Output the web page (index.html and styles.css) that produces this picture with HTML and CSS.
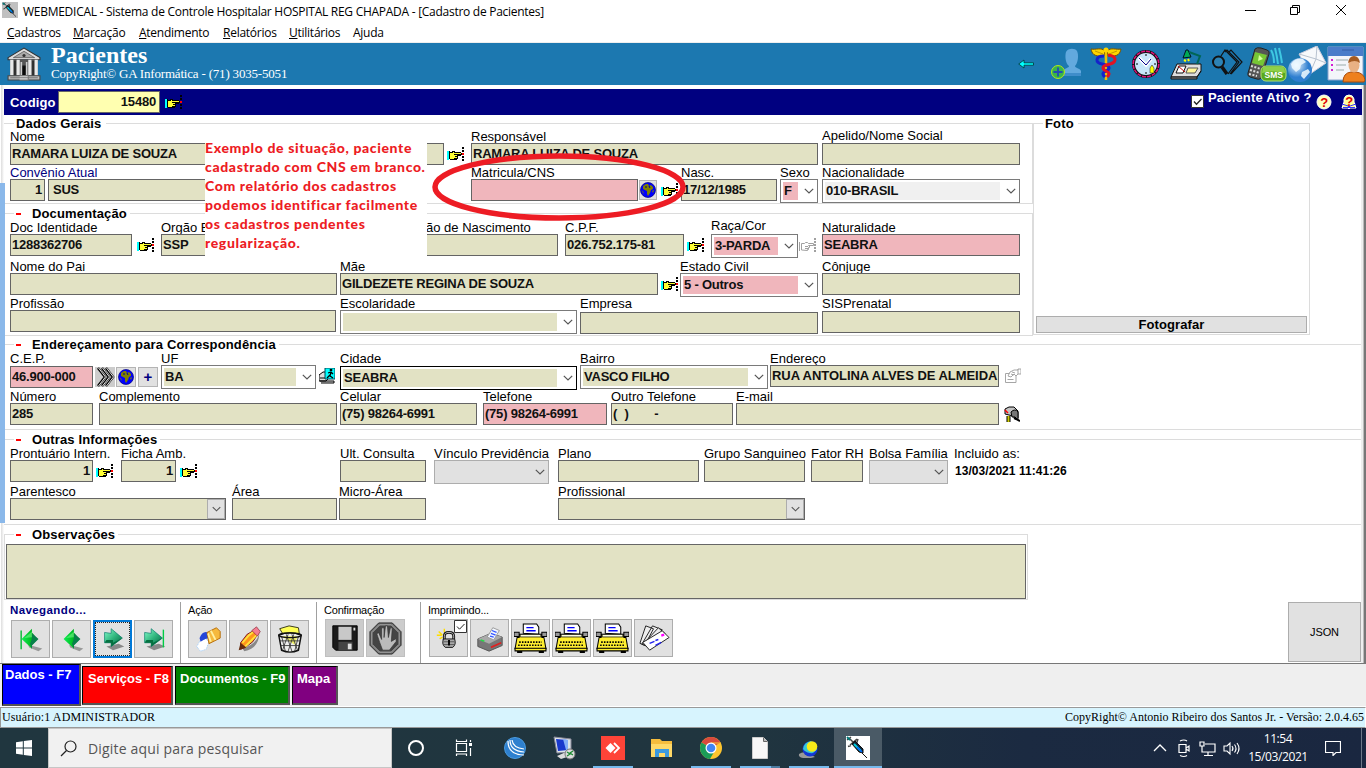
FILE: index.html
```html
<!DOCTYPE html>
<html lang="pt-BR">
<head>
<meta charset="utf-8">
<title>WEBMEDICAL - Cadastro de Pacientes</title>
<link rel="stylesheet" href="styles.css">
</head>
<body>
<svg class="defs" aria-hidden="true">
  <symbol id="hand" viewBox="0 0 17 15">
    <g shape-rendering="crispEdges">
    <path d="M0 4h2v9H0z" fill="#0ff"/>
    <path d="M2 4h1v1h2v-1h3v1h6v1h1v2h-1v1h-3v3h-1v1H3v-1H2z" fill="#000"/>
    <path d="M3 6h3V5h1v1h7v1H9v5H3z" fill="#ff3"/>
    <path d="M9 8h1v1H9zM9 10h1v1H9z" fill="#ff3"/>
    <path d="M7 7h2v1H7zM8 9h2v1H8zM7 11h2v1H7z" fill="#000"/>
    <path d="M15 0h2v2h-2zM15 3h2v2h-2zM15 9h2v2h-2zM15 12h2v2h-2z" fill="#000"/>
    <path d="M15 6h2v2h-2z" fill="#f00"/>
    </g>
  </symbol>
  <symbol id="hand-off" viewBox="0 0 17 15">
    <path d="M.5 4v9M2.500 12V5.500h3l1-1h2l1 1h5v2H9.500h1v2h-1v2h-1v1zM6 8.500h3M6 10.500h3" fill="none" stroke="#a0a0a0"/>
    <path d="M15 0h2v2h-2zM15 3h2v2h-2zM15 6h2v2h-2zM15 9h2v2h-2zM15 12h2v2h-2z" fill="#a0a0a0"/>
  </symbol>
  <symbol id="globe" viewBox="0 0 16 16">
    <circle cx="8" cy="8" r="7.500" fill="#00f" stroke="#000080" stroke-width=".7"/>
    <path d="M3 4l3-2h2l1 2 2-1 2 2v2l-2 1-1 3-2 3-1-2V9L5 8 3 7zM1.500 8l2 2v2zM12 9l2-1-1 3z" fill="#808000"/>
    <path d="M9 4l1 2M5 5h2" stroke="#00008b"/>
  </symbol>
  <symbol id="syringe" viewBox="0 0 24 24">
    <path d="M1 4l4-3M3 2l5 5M2 10.500l3-1M4 9l7-6M10 12l1-6 1-3" stroke="#444" stroke-width="1.500" fill="none"/>
    <path d="M1 1l3 3" stroke="#077" stroke-width="2"/>
    <path d="M6 8l3-3 8 8v4l-4-1z" fill="#123" stroke="#111"/>
    <path d="M8 8l7 7" stroke="#0cd" stroke-width="2"/>
    <path d="M11 11l5 5" stroke="#06f" stroke-width="1.500"/>
    <path d="M16 17l5 5" stroke="#111"/>
  </symbol>
  <symbol id="typewriter" viewBox="0 0 32 30">
    <path d="M9 10V1h13l2 3v7z" fill="#fff" stroke="#000"/>
    <path d="M12 4.500h7M12 7.500h9" stroke="#00f" stroke-width="1.300"/>
    <path d="M5 11h22v3h2l2 11H1l2-11h2z" fill="#ffee30" stroke="#000"/>
    <path d="M6 11h20v2.500H6z" fill="#ffd" stroke="#000" stroke-width=".7"/>
    <path d="M0 9h5v4H0zM27 9h5v4h-5z" fill="#999" stroke="#000"/>
    <path d="M5 18.500h22M4 21.500h24" stroke="#000" stroke-width="1.500" stroke-dasharray="1.500 1.200"/>
    <path d="M1 24.500h30v2.500H1z" fill="#ffee30" stroke="#000"/>
    <path d="M3 28h5M24 28h5" stroke="#000" stroke-width="2"/>
  </symbol>
  <symbol id="caret" viewBox="0 0 10 6"><path d="M.8.8L5 5 9.200.8" fill="none" stroke="#555" stroke-width="1.200"/></symbol>
  <linearGradient id="teal" x1="0" x2="1" y1="0" y2="1"><stop offset="0" stop-color="#8fc"/><stop offset=".5" stop-color="#2fb57d"/><stop offset="1" stop-color="#006040"/></linearGradient>
  <linearGradient id="lime" x1="0" x2="1"><stop offset="0" stop-color="#1e5"/><stop offset=".6" stop-color="#0b2"/><stop offset="1" stop-color="#043"/></linearGradient>
  <radialGradient id="earth" cx=".35" cy=".3"><stop offset="0" stop-color="#e8f5ff"/><stop offset="1" stop-color="#2f7fd0"/></radialGradient>
</svg>

<header class="titlebar">
  <svg class="app-icon"><rect width="16" height="16" fill="#c0c0c0"/><use href="#syringe" width="16" height="16"/></svg>
  <h1 class="title">WEBMEDICAL - Sistema de Controle Hospitalar HOSPITAL REG CHAPADA - [Cadastro de Pacientes]</h1>
  <svg class="window-buttons" viewBox="0 0 104 12"><path d="M0 6.500h11M45.500 3.500h7v7h-7zM47.500 3V1.500h7v7H53M91 1l10 10M101 1L91 11" fill="none" stroke="#000"/></svg>
</header>
<nav class="menu">
  <span class="m1"><u>C</u>adastros</span><span class="m2"><u>M</u>arcação</span><span class="m3"><u>A</u>tendimento</span><span class="m4"><u>R</u>elatórios</span><span class="m5"><u>U</u>tilitários</span><span>Ajuda</span>
</nav>

<div class="banner">
  <svg class="temple" viewBox="0 0 32 32">
    <path d="M1 10L16 1l15 9v2H1z" fill="#ddd" stroke="#333"/>
    <path d="M6 10l10-6 10 6z" fill="#aaa" stroke="#555" stroke-width=".7"/><circle cx="16" cy="8" r="1.500" fill="#333"/>
    <path d="M3 12h26v15H3z" fill="#555"/>
    <path d="M4.500 12v15M10.500 12v15M21.500 12v15M27.500 12v15" stroke="#e8e8e8" stroke-width="3"/>
    <path d="M13.500 14v13M18.500 14v13" stroke="#ccc" stroke-width="1.500"/>
    <path d="M7.500 13v14M24.500 13v14M15 18h2v9h-2z" stroke="#111" stroke-width="1"/>
    <path d="M1 27h30v4H1z" fill="#bbb" stroke="#444"/><path d="M3 29h26M12 27h8v4h-8" stroke="#777" fill="#ddd"/>
  </svg>
  <div class="banner-text"><h2>Pacientes</h2><p>CopyRight© GA Informática - (71) 3035-5051</p></div>
  <div class="banner-icons">
    <svg class="bi-arrow" viewBox="0 0 16 10"><path d="M.7 5L6 1v2.800h9.500v2.400H6V9z" fill="#0ff" stroke="#033" stroke-width=".8"/></svg>
    <svg viewBox="0 0 32 32"><path d="M14 22c1-2 5-2 5-4-4-3-4-11-3-14 2-4 9-4 11-1 2 4 1 12-2 15 0 2 5 2 6 5v5H10z" fill="#62a9de"/><path d="M15 25h16v3H12z" fill="#3f8dca"/><circle cx="8" cy="24" r="6.500" fill="#39b54a" stroke="#b5e61d" stroke-width="1"/><path d="M8 19.500v9M3.500 24h9" stroke="#234bb5" stroke-width="1.800"/></svg>
    <svg class="bi-cad" viewBox="0 0 32 34"><path d="M15 4C11 0 6 3 1 2c1 4 2 8 13 7zM17 4c4-4 9-1 14-2-1 4-2 8-13 7z" fill="#ffd500" stroke="#765000"/><path d="M5 4l8 3M27 4l-8 3" stroke="#b08a00" stroke-width=".8"/><path d="M16 2v31" stroke="#f5c000" stroke-width="2.500"/><path d="M14 9c-9 0-9 7-2 8 8 2 9 4 4 7-4 2-4 3-1 6" fill="none" stroke="#1622ca" stroke-width="3"/><path d="M18 8c9 1 9 7 2 9-8 2-9 4-4 7 4 2 4 3 1 6" fill="none" stroke="#e31322" stroke-width="3"/><circle cx="16" cy="3" r="2.500" fill="#ffd500"/></svg>
    <svg class="bi-clock" viewBox="0 0 28 30"><circle cx="14" cy="15" r="12.500" fill="#c9e6fa" stroke="#111" stroke-width="3"/><circle cx="14" cy="15" r="12.800" fill="none" stroke="#e0107a" stroke-width="1.500" stroke-dasharray="4 1"/><path d="M7 9l7 7 5-6" fill="none" stroke="#fff" stroke-width="3.500"/><path d="M7 9l7 7 5-6" fill="none" stroke="#008" stroke-width="1"/><path d="M14 5v2M14 23v2M4 15h2M22 15h2" stroke="#000"/><path d="M18 24v-5l2-3 2 3v5z" fill="#ff0" stroke="#333" stroke-width=".6"/></svg>
    <svg viewBox="0 0 32 32"><path d="M7 16h24v7l-4 6H1z" fill="#dedede" stroke="#111"/><path d="M1 29h26v2H1zM27 29l4-6" fill="#888" stroke="#111"/><path d="M9 18h7l-3 7H6z" fill="#fff" stroke="#111"/><path d="M8 18l7 6" stroke="#c00"/><path d="M18 20h10l-3 5h-9z" fill="#fff799" stroke="#555"/><path d="M13 10l3-8h2l3 7z" fill="#0a5" stroke="#012"/><path d="M19 4l11 4-3 8" fill="none" stroke="#065" stroke-width="2"/><path d="M14 12l2 1M18 11l1 2" stroke="#ff0" stroke-width="2"/></svg>
    <svg viewBox="0 0 32 32"><path d="M10 8l4-6 12 12-9 12M14 4l2-2 12 12-9 12M18 4l2-2 11 12-11 12" fill="none" stroke="#111" stroke-width="1.200"/><circle cx="7.500" cy="14" r="5.500" fill="#2d83b5" stroke="#111" stroke-width="2"/><path d="M11 19l5 7" stroke="#111" stroke-width="3.500"/></svg>
    <svg class="bi-wide" viewBox="0 0 40 36"><path d="M8 3q2-2 6-1l6 2q3 1 2 4l-7 22q-1 4-5 3l-7-2q-3-1-2-4z" fill="#555" stroke="#222"/><path d="M8 6l12 3-4 11-11-3z" fill="#76c635"/><path d="M12 9l4 4-5 2z" fill="#d6ff9d"/><path d="M4 20l10 3M3 24l10 3M2 28l8 2" stroke="#ddd" stroke-width="2" stroke-dasharray="2 1.500"/><path d="M24 4q3 5 3 13M28 2q2 8 3 16M32 2q2 8 3 15" fill="none" stroke="#3ec8e2" stroke-width="2"/><rect x="14" y="20" width="25" height="15" rx="5" fill="#58a91f" stroke="#b4e36f"/><path d="M16 21h20q2 0 2 6-12-3-23 0z" fill="#8ed049"/><text class="sms" x="17.500" y="31.500">SMS</text></svg>
    <svg class="bi-wide" viewBox="0 0 40 36"><path d="M12 8L30 0l9 17-16 11z" fill="#f7f9fb" stroke="#ccd"/><path d="M12 8l17 5 1-13M29 13l10 4M29 13l-6 14" fill="none" stroke="#b8c2cf"/><circle cx="13" cy="24" r="12" fill="url(#earth)"/><path d="M4 18q5-7 12-5l3 3-5 3-1 4-4 3-4-4zM15 26l6-3 2 3-6 7-3-3z" fill="#f1faff" opacity=".85"/></svg>
    <svg class="bi-card" viewBox="0 0 39 37"><path d="M1 1h35v33H1z" fill="#f3f5fa" stroke="#8aa4cf"/><path d="M1 1h35v9H1z" fill="#4a7cc9"/><path d="M15 4h12" stroke="#335da5"/><path d="M4 14h2M4 19h2M4 24h2" stroke="#d21ed2" stroke-width="2"/><path d="M9 14h12M9 19h10M9 24h8" stroke="#9aa" stroke-width="1"/><path d="M16 36q0-9 8-10h5q8 1 9 8l-1 2z" fill="#ee801e" stroke="#a94a0a"/><ellipse cx="27" cy="19" rx="5.500" ry="7.500" fill="#e9b184"/><path d="M21 17q1-7 6-7t6 7q-5-4-12 0z" fill="#a55b22"/></svg>
  </div>
</div>

<main class="work">
  <div class="edge-strip"></div>
  <div class="codebar">
    <label>Codigo</label><span class="code">15480</span><svg class="hand"><use href="#hand"/></svg>
    <div class="active">
      <svg class="check" viewBox="0 0 13 13"><path d="M.5.5h12v12H.5z" fill="#fff" stroke="#333"/><path d="M3 6.500l2.500 2.700L10.500 4" fill="none" stroke="#222" stroke-width="1.300"/></svg>
      <span>Paciente Ativo ?</span>
      <svg class="help" viewBox="0 0 16 16"><circle cx="8" cy="8" r="7" fill="#ffffc0" stroke="#fff"/><text class="q" x="4.300" y="13">?</text></svg>
      <svg class="help2" viewBox="0 0 16 16"><path d="M3 5q1-4 5-4t5 4v3l2 6H9l-1 1-1-1H1l2-6z" fill="#ff9" stroke="#fff"/><path d="M1 10l6 2 1 1 1-1 6-2M2 13.500h12" stroke="#33f" fill="none"/><text class="q" x="4.300" y="11.500">?</text></svg>
    </div>
  </div>

  <div class="upper">
    <div class="upper-main">
      <section class="group g-dados">
        <h2 class="plain">Dados Gerais</h2>
        <div class="row r1">
          <div class="f"><label>Nome</label><span class="in">RAMARA LUIZA DE SOUZA</span></div>
          <svg class="hand"><use href="#hand"/></svg>
          <div class="f"><label>Responsável</label><span class="in">RAMARA LUIZA DE SOUZA</span></div>
          <div class="f"><label>Apelido/Nome Social</label><span class="in"></span></div>
        </div>
        <div class="row r2">
          <div class="f"><label class="navy">Convênio Atual</label><span class="in right">1</span></div>
          <div class="f nolabel"><span class="in pad">SUS</span></div>
          <div class="f g3"><label>Matricula/CNS</label><span class="in pink"></span></div>
          <span class="mini low"><svg><use href="#globe"/></svg></span>
          <svg class="hand"><use href="#hand"/></svg>
          <div class="f"><label>Nasc.</label><span class="in">17/12/1985</span></div>
          <div class="f"><label>Sexo</label><span class="combo pink"><b>F</b><svg><use href="#caret"/></svg></span></div>
          <div class="f"><label>Nacionalidade</label><span class="combo light"><b>010-BRASIL</b><svg><use href="#caret"/></svg></span></div>
        </div>
      </section>
      <section class="group g-doc">
        <h2>Documentação</h2>
        <div class="row r3">
          <div class="f"><label>Doc Identidade</label><span class="in">1288362706</span></div>
          <svg class="hand"><use href="#hand"/></svg>
          <div class="f"><label>Orgão E</label><span class="in">SSP</span></div>
          <div class="f"><label class="cut">ão de Nascimento</label><span class="in"></span></div>
          <div class="f"><label>C.P.F.</label><span class="in">026.752.175-81</span></div>
          <svg class="hand"><use href="#hand"/></svg>
          <div class="f"><label class="up">Raça/Cor</label><span class="combo pink"><b>3-PARDA</b><svg><use href="#caret"/></svg></span></div>
          <svg class="hand"><use href="#hand-off"/></svg>
          <div class="f"><label>Naturalidade</label><span class="in pink">SEABRA</span></div>
        </div>
        <div class="row r4">
          <div class="f"><label>Nome do Pai</label><span class="in"></span></div>
          <div class="f"><label>Mãe</label><span class="in">GILDEZETE REGINA DE SOUZA</span></div>
          <svg class="hand"><use href="#hand"/></svg>
          <div class="f"><label>Estado Civil</label><span class="combo pink"><b>5 - Outros</b><svg><use href="#caret"/></svg></span></div>
          <div class="f"><label>Cônjuge</label><span class="in"></span></div>
        </div>
        <div class="row r5">
          <div class="f"><label>Profissão</label><span class="in"></span></div>
          <div class="f"><label>Escolaridade</label><span class="combo"><b></b><svg><use href="#caret"/></svg></span></div>
          <div class="f drop2"><label>Empresa</label><span class="in"></span></div>
          <div class="f drop1"><label>SISPrenatal</label><span class="in"></span></div>
        </div>
      </section>
    </div>
    <section class="photo"><h2 class="plain">Foto</h2><button class="shoot">Fotografar</button></section>
  </div>

  <section class="group g-end">
    <h2>Endereçamento para Correspondência</h2>
    <div class="row r6">
      <div class="f drop1"><label>C.E.P.</label><span class="in pink">46.900-000</span></div>
      <span class="mini chev"><svg viewBox="0 0 19 20"><path d="M2 1l7 9-7 9M6 1l7 9-7 9M10 1l7 9-7 9" fill="none" stroke="#000" stroke-width="2.500"/><path d="M2.500 1l7 9-7 9M6.500 1l7 9-7 9M10.500 1l7 9-7 9" fill="none" stroke="#fff" stroke-width=".9"/></svg></span>
      <span class="mini"><svg><use href="#globe"/></svg></span>
      <span class="mini plus">+</span>
      <div class="f"><label>UF</label><span class="combo"><b>BA</b><svg><use href="#caret"/></svg></span></div>
      <svg class="walk" viewBox="0 0 16 16"><path d="M0 7l4-3h6v6l-3 3H0zM1 10h12M1 13h14v2H2" fill="#ddd" stroke="#000"/><path d="M6 0h10v11H6z" fill="#0ff" stroke="#045"/><path d="M12 1v2" stroke="#000" stroke-width="2.500"/><path d="M9 5l3-1 2 2M12 4l-1 4 3 2M11 7l-3 3" fill="none" stroke="#000" stroke-width="1.300"/></svg>
      <div class="f drop1"><label>Cidade</label><span class="combo strong"><b>SEABRA</b><svg><use href="#caret"/></svg></span></div>
      <div class="f"><label>Bairro</label><span class="combo"><b>VASCO FILHO</b><svg><use href="#caret"/></svg></span></div>
      <div class="f"><label>Endereço</label><span class="in long">RUA ANTOLINA ALVES DE ALMEIDA</span></div>
      <svg class="walk" viewBox="0 0 16 16"><path d="M.5 5.500h4M11 7.500v7H.5v-9M3 8l2-4 4-2h4V1h3v5h-3l-2 2-2-2-3 3-3-1M6 6l3 1M7 4l3 1M13 1v5M2.500 11.500h6" fill="none" stroke="#a6a6a6"/></svg>
    </div>
    <div class="row r7">
      <div class="f"><label>Número</label><span class="in">285</span></div>
      <div class="f"><label>Complemento</label><span class="in"></span></div>
      <div class="f"><label>Celular</label><span class="in">(75) 98264-6991</span></div>
      <div class="f"><label>Telefone</label><span class="in pink">(75) 98264-6991</span></div>
      <div class="f"><label>Outro Telefone</label><span class="in spaced">( &nbsp;) &nbsp; &nbsp; &nbsp; -</span></div>
      <div class="f"><label>E-mail</label><span class="in"></span></div>
      <svg class="walk" viewBox="0 0 16 16"><path d="M1 3l4-2h5l4 4v7l-3 1-2-3-8-2z" fill="#c4c4c4" stroke="#000"/><path d="M7 6q4-4 7 0v8l-3-3H8z" fill="#777" stroke="#000"/><path d="M10 12l6 3" stroke="#000" stroke-width="2"/><path d="M4.500 10v6" stroke="#000" stroke-width="4"/><path d="M4.500 10v6" stroke="#cc0" stroke-width="2"/><path d="M1 4l3 3" stroke="#f00" stroke-width="1.500"/></svg>
    </div>
  </section>

  <section class="group g-outras">
    <h2>Outras Informações</h2>
    <div class="row r8">
      <div class="f"><label>Prontuário Intern.</label><span class="in right">1</span></div>
      <svg class="hand"><use href="#hand"/></svg>
      <div class="f"><label>Ficha Amb.</label><span class="in right">1</span></div>
      <svg class="hand"><use href="#hand"/></svg>
      <div class="f"><label>Ult. Consulta</label><span class="in"></span></div>
      <div class="f"><label>Vínculo Previdência</label><span class="combo off"><b></b><svg><use href="#caret"/></svg></span></div>
      <div class="f"><label>Plano</label><span class="in"></span></div>
      <div class="f"><label>Grupo Sanguineo</label><span class="in"></span></div>
      <div class="f"><label>Fator RH</label><span class="in"></span></div>
      <div class="f"><label>Bolsa Família</label><span class="combo off"><b></b><svg><use href="#caret"/></svg></span></div>
      <div class="f"><label>Incluido as:</label><time>13/03/2021 11:41:26</time></div>
    </div>
    <div class="row r9">
      <div class="f"><label>Parentesco</label><span class="in lookup"><i><svg><use href="#caret"/></svg></i></span></div>
      <div class="f"><label>Área</label><span class="in"></span></div>
      <div class="f"><label>Micro-Área</label><span class="in"></span></div>
      <div class="f"><label>Profissional</label><span class="in lookup"><i><svg><use href="#caret"/></svg></i></span></div>
    </div>
  </section>

  <section class="group g-obs"><h2>Observações</h2><div class="notes"></div></section>

  <div class="toolbar">
    <div class="tools t-nav"><h3>Navegando...</h3><div class="btns">
      <button><svg viewBox="0 0 32 32"><path d="M13 22l15 4-4 3-10-4z" fill="#999"/><path d="M5.500 7v20" stroke="#0b3" stroke-width="1.500"/><path d="M6 16L17 5v4l6 7-6 6v4z" fill="url(#lime)"/><path d="M17 5v5l7 6-7 7v4l-2-6 2-5z" fill="#08804a"/><path d="M9 15l8-7v6" fill="#8f9" opacity=".5"/></svg></button>
      <button><svg viewBox="0 0 32 32"><path d="M13 22l15 4-4 3-10-4z" fill="#999"/><path d="M7 16L18 5v4l6 7-6 6v4z" fill="url(#lime)"/><path d="M18 5v5l7 6-7 7v4l-2-6 2-5z" fill="#08804a"/><path d="M10 15l8-7v6" fill="#8f9" opacity=".5"/></svg></button>
      <button class="focus"><svg viewBox="0 0 32 32"><path d="M9 24l13-3 6 3-12 4z" fill="#888"/><path d="M7 9l7 1V5l12 10-12 9v-4H7z" fill="url(#teal)" stroke="#076" stroke-width=".7"/><path d="M14 24v-4H7l2-3h7v3l10-5z" fill="#067040"/></svg></button>
      <button><svg viewBox="0 0 32 32"><path d="M8 24l13-3 7 3-12 4z" fill="#888"/><path d="M6 9l7 1V5l12 10-12 9v-4H6z" fill="url(#teal)" stroke="#076" stroke-width=".7"/><path d="M13 24v-4H6l2-3h7v3l10-5z" fill="#067040"/><path d="M26 6v19" stroke="#0c4" stroke-width="1.500"/></svg></button>
    </div></div>
    <div class="tools t-act"><h3>Ação</h3><div class="btns">
      <button><svg viewBox="0 0 32 32"><path d="M4 24l4-7 6-1 3 3-3 8-6 2z" fill="#fff" stroke="#9cf" stroke-dasharray="1 1"/><path d="M7 15q3-8 9-6l2 6-5 1-5 3z" fill="#2545d8"/><path d="M15 9l10-5 4 4v7l-12 6z" fill="#f6b93d" stroke="#b46b08"/><path d="M19 7l5 10M16 10l3 9" stroke="#fff0a0" stroke-width="2"/></svg></button>
      <button><svg viewBox="0 0 32 32"><path d="M9 26q14-4 18-15-1 15-16 18z" fill="#888"/><path d="M7 20l7-9 7-4 5 3-6 9-8 6-5 2z" fill="#ff941b" stroke="#712"/><path d="M9 20l7-8 5-4M12 24l8-8 5-5" stroke="#ffe23b" stroke-width="2" fill="none"/><path d="M19 7l5-4 4 5-3 5z" fill="#f37d91" stroke="#712" stroke-width=".6"/><path d="M5 28l2-8 6 5z" fill="#642a0c"/></svg></button>
      <button><svg viewBox="0 0 32 32"><path d="M8 10L5 5l10-3 10 2 1 7z" fill="#ff5" stroke="#331"/><path d="M4 12q12-5 24 0l-3 16q-9 4-18 0z" fill="#eee" stroke="#111" stroke-width="1.500"/><path d="M7 13h17l-3 9z" fill="#ee6"/><path d="M7 13l4 16M12 11l6 18M18 11l6 17M25 13l-4 16M20 11l-6 18M14 11L8 28M5 18h22M6 23h20" stroke="#333" stroke-width=".9"/><ellipse cx="16" cy="12" rx="12" ry="2.500" fill="none" stroke="#111" stroke-width="1.500"/></svg></button>
    </div></div>
    <div class="tools t-conf"><h3>Confirmação</h3><div class="btns">
      <button class="dim"><svg viewBox="0 0 32 32"><path d="M3 3h26v26H6l-3-3z" fill="#1b1b1b" stroke="#000"/><path d="M9 4h14v14H9z" fill="#c8c8c8"/><path d="M9 20h15v9H9z" fill="#444"/><path d="M19 22h4v6h-4z" fill="#ddd"/><path d="M25 5h2v3h-2z" fill="#ddd"/></svg></button>
      <button class="dim"><svg class="full" viewBox="0 0 34 34"><path d="M10 1h14l9 9v14l-9 9H10l-9-9V10z" fill="#777" stroke="#222"/><path d="M11 3h12l8 8v12l-8 8H11l-8-8V11z" fill="#444" stroke="#aaa"/><path d="M11 21L8 12l2-1 3 7V6h2.500v10L17 4h2l1 12 2-10h2l-1 14 5-3v3l-7 9h-7z" fill="#bbb" stroke="#333" stroke-width=".7"/></svg></button>
    </div></div>
    <div class="tools t-print"><h3>Imprimindo...</h3><div class="btns">
      <button class="lockbtn"><svg viewBox="0 0 32 32"><path d="M5 9l4 4M6 17l3-2M11 6v4M3 13h5" stroke="#fd0" stroke-width="1.500"/><path d="M11 18v-4q0-4 5-4t5 4v3" fill="none" stroke="#111" stroke-width="3"/><path d="M11 18v-4q0-4 5-4t5 4v3" fill="none" stroke="#bbb" stroke-width="1"/><path d="M10 17h12q2 6-2 9h-8q-4-3-2-9z" fill="#aaa" stroke="#111"/><path d="M10 20h12M10 23h12" stroke="#555"/><path d="M15 18h2v6h-2z"/></svg>
        <svg class="check over" viewBox="0 0 13 13"><path d="M.5.5h12v12H.5z" fill="#fff" stroke="#333"/><path d="M3 6.500l2.500 2.700L10.500 4" fill="none" stroke="#222"/></svg></button>
      <button><svg viewBox="0 0 32 32"><path d="M3 17l14-6 12 4v9l-14 6L3 25z" fill="#777" stroke="#555"/><path d="M3 17l14-6 12 4-14 7z" fill="#aaa"/><path d="M13 15l6-10 7 3-6 10z" fill="#f4f8ff" stroke="#999"/><path d="M18 8l5 2M17 11l5 2M16 14l4 1" stroke="#35f" stroke-width="1.300"/><path d="M17 26l11-5" stroke="#d22" stroke-width="1.800"/><path d="M6 18l4 1.500" stroke="#2d4" stroke-width="1.500"/></svg></button>
      <button><svg class="full"><use href="#typewriter"/></svg></button>
      <button><svg class="full"><use href="#typewriter"/></svg></button>
      <button><svg class="full"><use href="#typewriter"/></svg></button>
      <button><svg class="full" viewBox="0 0 34 34"><path d="M3 22L9 4l8 3-9 17zM5 23L16 4l10 4-13 18z" fill="#eee" stroke="#222"/><path d="M7 22L22 6l7 6-14 15z" fill="#eee" stroke="#222"/><path d="M6 21l20-12 7 7-20 13z" fill="#fff" stroke="#222"/><path d="M13 22l5-2M19 24l6-3M19 19l3-1" stroke="#22e" stroke-width="1.500"/><path d="M25 14l3-1" stroke="#f0f" stroke-width="2.500"/></svg></button>
    </div></div>
    <button class="json">JSON</button>
  </div>

  <p class="callout">Exemplo de situação, paciente<br>cadastrado com CNS em branco.<br>Com relatório dos cadastros<br>podemos identificar facilmente<br>os cadastros pendentes<br>regularização.</p>
  <svg class="ring" viewBox="0 0 254 68"><ellipse cx="127" cy="34" rx="124" ry="31" fill="none" stroke="#ed1c24" stroke-width="5.500"/></svg>
</main>

<nav class="tabs">
  <a class="tab blue">Dados - F7</a><a class="tab red">Serviços - F8</a><a class="tab green">Documentos - F9</a><a class="tab purple">Mapa</a>
</nav>
<div class="status"><span class="user">Usuário:1 ADMINISTRADOR</span><span>CopyRight© Antonio Ribeiro dos Santos Jr. - Versão: 2.0.4.65</span></div>

<footer class="taskbar">
  <div class="start"><svg viewBox="0 0 16 16"><path d="M0 2.200L6.800 1.200v6.300H0zM7.800 1L16 0v7.500H7.800zM0 8.500h6.800v6.300L0 13.800zM7.800 8.500H16V16l-8.200-1.100z" fill="#fff"/></svg></div>
  <div class="search"><svg viewBox="0 0 17 17"><circle cx="10.500" cy="6.500" r="5.500" fill="none" stroke="#222" stroke-width="1.200"/><path d="M6.500 10.500L1 16" stroke="#222" stroke-width="1.300"/></svg><span>Digite aqui para pesquisar</span></div>
  <div class="apps">
    <span class="app"><svg viewBox="0 0 24 24"><circle cx="12" cy="12" r="7" fill="none" stroke="#fff" stroke-width="2"/></svg></span>
    <span class="app"><svg viewBox="0 0 24 24"><path d="M3.500 7.500h10v8h-10zM3.500 3.500v2h10v-2M3.500 20v-2h10v2M17.500 4v2M17.500 12v8" fill="none" stroke="#fff" stroke-width="1.200"/><path d="M16 7h3v3h-3z" fill="#fff"/></svg></span>
    <span class="app"><svg viewBox="0 0 24 24"><circle cx="13" cy="12" r="10.500" fill="#2e80cf" stroke="#4a9be0"/><path d="M6 5q0 14 16 14M8 4q0 11 14 12M10 4q1 8 12 9" fill="none" stroke="#fff" stroke-width="1.200"/></svg></span>
    <span class="app"><svg viewBox="0 0 24 24"><path d="M2 1l17 2v13L5 17z" fill="#dce4e8" stroke="#889"/><path d="M4 3l12 1v10L6 15z" fill="#1838cd"/><path d="M11 3l5 1v10h-2z" fill="#83aef8"/><path d="M5 20l9-4 4 4-9 3z" fill="#ddd"/><circle cx="18" cy="18" r="5" fill="#ddd" stroke="#777"/><path d="M15 16l3 2-3 2M21 15l-3 2 3 2" fill="none" stroke="#1a8a30" stroke-width="1.300"/></svg></span>
    <span class="app open"><svg viewBox="0 0 24 24"><path d="M0 0h24v24H0z" fill="#ff4438"/><path d="M4.500 12l5-5 5 5-5 5z" fill="#fff"/><path d="M13 7l5 5-5 5" fill="none" stroke="#fff" stroke-width="1.800"/></svg></span>
    <span class="app"><svg viewBox="0 0 24 24"><path d="M1 3h9l2 2h10v16H1z" fill="#f6bd3d"/><path d="M1 8h21v13H1z" fill="#ffd968"/><path d="M5 21v-8h14v8h-4v-4H9v4z" fill="#3c9ae0"/></svg></span>
    <span class="app open"><svg viewBox="0 0 24 24"><circle cx="12" cy="12" r="11" fill="#fdc52f"/><path d="M12 12L2.500 6.500A11 11 0 0121.500 6.500z" fill="#d94a3d"/><path d="M12 12L2.500 6.500A11 11 0 0011 23l4-7z" fill="#1b9c58"/><path d="M12 7h9.800" stroke="#fdc52f"/><circle cx="12" cy="12" r="5.500" fill="#fff"/><circle cx="12" cy="12" r="4.300" fill="#4285f4"/></svg></span>
    <span class="app open split"><svg viewBox="0 0 24 24"><path d="M4.500 1.500h11l4 4v17h-15z" fill="#f7f7f7" stroke="#ccc"/><path d="M15.500 1.500v4h4" fill="#bbb" stroke="#666"/></svg></span>
    <span class="app open"><svg viewBox="0 0 24 24"><path d="M2 18q4-3 9-1l7 4-4 1H6q-5-1-4-4z" fill="#999"/><circle cx="13" cy="13" r="7.500" fill="#1436d4"/><path d="M6 13q1-7 8-8l6 8q-3 5-7 4-5-1-7-4z" fill="#35c7d5"/><circle cx="15" cy="10.500" r="5.300" fill="#f7ea18"/></svg></span>
    <span class="app open current"><svg viewBox="0 0 24 24"><path d="M0 0h24v24H0z" fill="#fff"/><use href="#syringe"/></svg></span>
  </div>
  <div class="tray">
    <svg class="tray-icons" viewBox="0 0 90 20"><path d="M1 13l6-6 6 6" fill="none" stroke="#fff" stroke-width="1.300"/><path d="M26 6.500h7v8h-7zM33 10l3-2v5l-3-2M27 3q4-2 7 0M27 17.500q4 2 7 0" fill="none" stroke="#fff" stroke-width="1.200"/><path d="M52 6h10v8H49v-3M55 14v3M51 17.500h9M47 4h4v4h-4zM49 8v3" fill="none" stroke="#fff" stroke-width="1.200"/><path d="M71 8h3l3-3v11l-3-3h-3zM79 8q2 2.500 0 5M81.500 6.500q3 4 0 8M84 5q4 5.500 0 11" fill="none" stroke="#fff" stroke-width="1.100"/></svg>
    <div class="clock">11:54<br>15/03/2021</div>
    <svg class="note" viewBox="0 0 16 16"><path d="M.5 1.500h15v11h-4.500l-3 3v-3H.5z" fill="none" stroke="#fff" stroke-width="1.200"/></svg>
    <span class="peek"></span>
  </div>
</footer>
</body>
</html>
```
FILE: styles.css
```css
* { box-sizing: border-box; }
body { margin: 0; width: 1366px; height: 768px; overflow: hidden; display: flex; flex-direction: column; background: #fff; font: 13px "Liberation Sans", Arial, sans-serif; color: #000; }
h1, h2, h3, p { margin: 0; }
svg { display: block; flex: none; }
button { padding: 0; margin: 0; color: inherit; }
.defs { position: absolute; width: 0; height: 0; }

.titlebar { height: 23px; flex: none; display: flex; align-items: center; padding-left: 2px; font-family: "Open Sans", sans-serif; }
.app-icon { width: 16px; height: 16px; margin-top: -3px; }
.title { margin-left: 5px; font-size: 12px; font-weight: 400; letter-spacing: -.27px; white-space: nowrap; }
.window-buttons { width: 104px; height: 12px; margin: -3px 17px 0 auto; }
.menu { height: 20px; flex: none; display: flex; align-items: center; padding-left: 7px; font: 12px "Open Sans", sans-serif; letter-spacing: -.25px; border-bottom: 1px solid #eee; }
.m1 { width: 66px; } .m2 { width: 66px; } .m3 { width: 84px; } .m4 { width: 66px; } .m5 { width: 64px; }

.banner { height: 42px; flex: none; display: flex; background: #1c78b0; color: #fff; font-family: "Liberation Serif", serif; }
.temple { width: 34px; height: 34px; margin: 4px 10px 0 7px; }
.banner-text h2 { font-size: 24px; line-height: 24px; letter-spacing: .05px; }
.banner-text p { font-size: 13px; line-height: 14px; white-space: nowrap; letter-spacing: -.19px; }
.banner-icons { margin-left: auto; display: grid; grid-template-columns: 32px 40px 42px 38px 41px 36px 40px 40px 39px; align-items: center; }
.banner-icons svg { width: 32px; height: 32px; }
.banner-icons .bi-arrow { width: 16px; height: 10px; }
.banner-icons .bi-cad { height: 34px; }
.banner-icons .bi-clock { width: 28px; height: 30px; }
.banner-icons .bi-wide { width: 40px; height: 36px; }
.banner-icons .bi-card { width: 39px; height: 37px; }
.sms { font: bold 8.500px "Liberation Sans", sans-serif; fill: #fff; }

.work { position: relative; height: 580px; flex: none; padding: 4px 5px 0 4px; border-bottom: 2px solid #777; background: linear-gradient(90deg, #fff 1px, #ddd 1px, #f2f2f2 3px, #fff 4px, #fff 1361px, #ddd 1362px, #fff 1363px, #777 1364px); }
.edge-strip { position: absolute; left: 0; top: 98px; width: 5px; height: 340px; background: #8ab8ea; }
.codebar { height: 26px; display: flex; background: #000080; color: #fff; font-weight: 700; letter-spacing: .15px; margin-right: -1px; }
.codebar label { width: 54px; padding: 6px 0 0 6px; line-height: 15px; }
.code { width: 102px; height: 22px; margin-top: 2px; border: 1px solid #666; background: #ffffb0; color: #111; text-align: right; padding: 2px 3px 0 0; line-height: 16px; letter-spacing: -.2px; }
.codebar .hand { margin: 6px 0 0 5px; }
.active { margin-left: auto; display: flex; padding-right: 5px; }
.check { width: 13px; height: 13px; }
.active .check { margin: 6px 4px 0 0; }
.active span { line-height: 17px; font-size: 13px; white-space: nowrap; width: 108px; letter-spacing: .18px; }
.help, .help2 { width: 16px; height: 16px; margin-top: 5px; }
.help2 { margin-left: 9px; }
.q { font: bold 13px "Liberation Sans", sans-serif; fill: #e00000; }

.upper { display: flex; padding-top: 8px; margin-bottom: 8px; }
.upper-main { width: 1029px; }
.group { display: flex; flex-direction: column; border: 1px solid #dcdcdc; padding-left: 5px; }
.group h2, .photo h2 { align-self: flex-start; flex: none; position: relative; height: 16px; line-height: 16px; margin: -8px 0 -8px 4px; padding: 0 3px 0 18px; font-size: 13px; letter-spacing: .14px; background: #fff; white-space: nowrap; }
.group h2::before { content: ""; position: absolute; left: 2px; top: 7px; width: 5px; height: 2px; background: #f00; }
.group h2.plain, .photo h2 { padding: 0 4px 0 2px; }
.group h2.plain::before { display: none; }
.g-dados { height: 81px; border-left: 0; padding-left: 6px; }
.g-doc { height: 123px; margin-top: 9px; border-left: 0; padding-left: 6px; }
.photo { width: 277px; height: 212px; display: flex; flex-direction: column; border: 1px solid #dcdcdc; padding: 0 2px 0 2px; }
.photo h2 { margin-left: 7px; }
.shoot { margin-top: auto; margin-bottom: 1px; height: 17px; border: 1px solid #adadad; background: #e1e1e1; font: bold 13px "Liberation Sans", sans-serif; line-height: 15px; letter-spacing: .1px; }
.g-end, .g-outras { height: 86px; border-width: 1px 0; padding-left: 6px; }
.g-outras { margin-top: 9px; }
.g-obs { height: 66px; width: 1024px; margin-top: 9px; padding: 0 0 0 1px; }
.g-obs h2 { margin-left: 8px; }
.notes { height: 55px; margin-top: 9px; margin-right: 1px; border: 1px solid #666; background: #e2e2c4; flex: none; }

.row { display: grid; height: 36px; flex: none; align-items: start; }
.g-dados .r1 { margin-top: 5px; }
.g-doc .r3, .g-end .r6, .g-outras .r8 { margin-top: 6px; }
.r4 { margin-top: 3px; }
.r5 { margin-top: 1px; }
.r7, .r9 { margin-top: 2px; }
.r1 { grid-template-columns: 437px 24px 351px 198px; }
.r1 > :nth-child(1) { margin-right: 3px; }
.r1 > :nth-child(3) { margin-right: 4px; }
.r1 > :nth-child(4) label { line-height: 14px; }
.r2 { grid-template-columns: 38px 423px 168px 22px 20px 99px 42px 198px; }
.r2 > :nth-child(1) { margin-right: 3px; }
.r2 > :nth-child(2) { margin-right: 60px; }
.r2 > :nth-child(3) { margin-right: 1px; }
.r2 > :nth-child(6) { margin-right: 3px; }
.r2 > :nth-child(7) { margin-right: 4px; }
.r3 { grid-template-columns: 127px 24px 179px 225px 122px 24px 88px 23px 198px; }
.r3 > :nth-child(1), .r3 > :nth-child(3) { margin-right: 5px; }
.r3 > :nth-child(4) { margin-left: 47px; margin-right: 7px; }
.r3 > :nth-child(5) { margin-right: 3px; }
.r3 > :nth-child(7) { margin-right: 1px; }
.r4 { grid-template-columns: 330px 321px 19px 142px 198px; }
.r4 > :nth-child(1), .r4 > :nth-child(2) { margin-right: 3px; }
.r4 > :nth-child(4) { margin-right: 4px; }
.r5 { grid-template-columns: 330px 240px 242px 198px; }
.r5 > :nth-child(1), .r5 > :nth-child(3) { margin-right: 4px; }
.r5 > :nth-child(2) { margin-right: 3px; }
.r6 { grid-template-columns: 85px 21px 22px 23px 158px 21px 240px 190px 235px 16px; }
.r6 > :nth-child(1), .r6 > :nth-child(8) { margin-right: 2px; }
.r6 > :nth-child(5), .r6 > :nth-child(7) { margin-right: 3px; }
.r6 > :nth-child(9) { margin-right: 6px; }
.r7 { grid-template-columns: 89px 241px 143px 128px 125px 268px 16px; }
.r7 > :nth-child(1), .r7 > :nth-child(3) { margin-right: 6px; }
.r7 > :nth-child(2), .r7 > :nth-child(5) { margin-right: 3px; }
.r7 > :nth-child(4) { margin-right: 4px; }
.r7 > :nth-child(6) { margin-right: 5px; }
.r8 { grid-template-columns: 86px 25px 59px 160px 94px 124px 146px 107px 58px 85px 130px; }
.r8 > :nth-child(1) { margin-right: 3px; }
.r8 > :nth-child(3) { margin-right: 4px; }
.r8 > :nth-child(5) { margin-right: 8px; }
.r8 > :nth-child(6) { margin-right: 9px; }
.r8 > :nth-child(7) { margin-right: 5px; }
.r8 > :nth-child(8), .r8 > :nth-child(9), .r8 > :nth-child(10) { margin-right: 6px; }
.r9 { grid-template-columns: 222px 107px 219px 247px; }
.r9 > :nth-child(1) { margin-right: 6px; }
.r9 > :nth-child(2) { margin-right: 2px; }
.r9 > :nth-child(3) { margin-right: 132px; }

.f { display: flex; flex-direction: column; min-width: 0; }
.f label { height: 14px; line-height: 16px; white-space: nowrap; }
.f label.up { margin-top: -2px; margin-bottom: 2px; }
.f label.cut { margin-left: 39px; }
.navy { color: #000080; }
.nolabel { padding-top: 14px; }
.f.drop1 label { height: 15px; }
.f.drop2 label { height: 16px; }
.in { display: block; position: relative; height: 22px; border: 1px solid #646464; background: #e2e2c4; padding: 1px 2px 0 1px; line-height: 18px; font-weight: 700; letter-spacing: -.22px; white-space: nowrap; color: #111; overflow: hidden; }
.in.right { text-align: right; }
.in.pad { padding-left: 4px; }
.in.pink, .combo.pink b { background: #f0b6bc; }
.in.long { letter-spacing: -.05px; }
.in.spaced { letter-spacing: 0; }
.in.lookup { padding: 0; display: flex; justify-content: flex-end; }
.lookup i { width: 18px; height: 20px; border: 1px solid #adadad; background: #e1e1e1; display: flex; align-items: center; justify-content: center; }
.lookup svg { width: 9px; height: 6px; }
.combo { display: flex; align-items: center; height: 24px; border: 1px solid #7a7a7a; padding: 2px 4px 2px 2px; background: #fff; }
.combo b { flex: 1; height: 18px; margin-right: 6px; padding-left: 1px; line-height: 17px; letter-spacing: -.22px; background: #e2e2c4; color: #111; white-space: nowrap; }
.combo svg { width: 10px; height: 6px; margin-right: -1px; }
.combo.light b { background: #f0f0f0; }
.combo.strong { border-color: #000; }
.combo.off { background: #e1e1e1; border-color: #adadad; }
.combo.off b { background: none; }
.hand { width: 17px; height: 15px; }
.row .hand { margin-top: 18px; }
.mini { width: 20px; height: 20px; margin-top: 16px; border: 1px solid #b4b4b4; background: #e1e1e1; display: flex; align-items: center; justify-content: center; }
.mini svg { width: 16px; height: 16px; }
.mini.low { width: 18px; margin-top: 15px; }
.mini.chev { border: 0; background: #ccc; }
.mini.chev svg { width: 19px; height: 20px; }
.plus { color: #000080; font-weight: 700; font-size: 15px; line-height: 16px; padding-bottom: 1px; }
.walk { width: 16px; height: 16px; margin-top: 17px; }
time { font-weight: 700; font-size: 12px; line-height: 22px; padding-left: 1px; letter-spacing: .05px; white-space: nowrap; }

.toolbar { display: flex; padding-top: 2px; height: 63px; }
.tools { height: 61px; padding-top: 1px; border-right: 1px solid #a0a0a0; }
.tools h3 { height: 16px; line-height: 14px; font-size: 11px; font-weight: 400; letter-spacing: -.2px; white-space: nowrap; }
.t-nav h3 { font-weight: 700; color: #000080; font-size: 11.500px; letter-spacing: .4px; margin-left: -1px; }
.btns { display: flex; gap: 2px; }
.btns button { width: 39px; height: 38px; border: 1px solid #adadad; background: #e1e1e1; display: flex; align-items: center; justify-content: center; }
.btns svg { width: 30px; height: 30px; }
.btns svg.full { width: 33px; height: 33px; }
.btns .focus { border: 2px solid #0078d7; outline: 1px dotted #222; outline-offset: -3px; }
.btns .dim { background: #ccc; border-color: #bfbfbf; }
.btns .lockbtn { position: relative; }
.btns svg.over { position: absolute; top: 0; right: 0; width: 13px; height: 13px; }
.t-nav { width: 177px; padding-left: 7px; }
.t-act { width: 136px; padding-left: 7px; }
.t-nav .btns, .t-act .btns { padding-top: 1px; }
.t-conf { width: 104px; padding-left: 8px; }
.t-conf h3, .t-print h3 { margin-left: -1px; }
.t-print { border: 0; padding-left: 8px; }
.json { width: 73px; height: 60px; margin-left: auto; border: 1px solid #adadad; background: #e1e1e1; font: 11px "Liberation Sans", sans-serif; letter-spacing: -.1px; }

.callout { position: absolute; left: 205px; top: 53px; width: 222px; height: 118px; background: #fff; color: #ed1c24; font: 900 14px/19px Lato, sans-serif; letter-spacing: .63px; white-space: nowrap; }
.ring { position: absolute; left: 432px; top: 68px; width: 254px; height: 68px; }

.tabs { height: 43px; flex: none; margin-top: -1px; background: #efefef; display: flex; align-items: flex-start; padding-left: 2px; border-bottom: 1px solid #fff; position: relative; color: #fff; font-weight: 700; font-size: 13px; white-space: nowrap; }
.tab { height: 39px; margin-top: 2px; border: 1px solid #000; border-right: 2px solid #555; border-bottom: 2px solid #555; padding-top: 4px; line-height: 15px; letter-spacing: 0; }
.blue { width: 79px; height: 42px; margin-top: 0; background: #00f; padding: 2px 0 0 2px; }
.red { width: 91px; margin-left: 1px; background: #f00; padding-left: 5px; }
.green { width: 115px; margin-left: 2px; background: #008000; padding-left: 4px; }
.purple { width: 46px; margin-left: 2px; background: #800080; padding-left: 4px; }
.status { height: 21px; flex: none; border: 1px solid #999; border-right-color: #fff; background: #d7f4fe; display: flex; justify-content: space-between; padding: 0 1px; font: 12px/18px "Liberation Serif", serif; }
.user { letter-spacing: .12px; }

.taskbar { height: 40px; flex: none; display: flex; background: linear-gradient(90deg, #20363f, #20353f 55%, #1b2a41 75%, #1a2740); color: #fff; font-family: "Open Sans", sans-serif; }
.start { width: 48px; display: flex; align-items: center; justify-content: center; }
.start svg { width: 16px; height: 16px; }
.search { width: 344px; height: 40px; background: #f1f1f1; border: 1px solid #c6c6c6; display: flex; align-items: center; color: #555; font-size: 14px; letter-spacing: .17px; padding-left: 11px; }
.search svg { width: 17px; height: 17px; margin-right: 11px; }
.apps { display: flex; gap: 1px; }
.app { width: 48px; height: 40px; position: relative; display: flex; align-items: center; justify-content: center; }
.app svg { width: 24px; height: 24px; }
.open::after { content: ""; position: absolute; left: 4px; bottom: 0; width: 40px; height: 2px; background: #76b9ed; }
.split::after { background: linear-gradient(90deg, #76b9ed 31px, #4c7ba0 31px); }
.app:nth-child(n+4) { left: 1px; }
.current { background: #4a5a66; }
.current::after { left: 0; width: 48px; }
.tray { margin-left: auto; display: flex; align-items: center; height: 40px; }
.tray-icons { width: 90px; height: 20px; }
.clock { width: 78px; font-size: 12px; line-height: 18px; text-align: center; letter-spacing: -.4px; padding-left: 2px; margin-left: -5px; }
.note { width: 16px; height: 16px; margin: 0 20px 0 9px; }
.peek { width: 5px; height: 40px; border-left: 1px solid #6d7888; }
```
